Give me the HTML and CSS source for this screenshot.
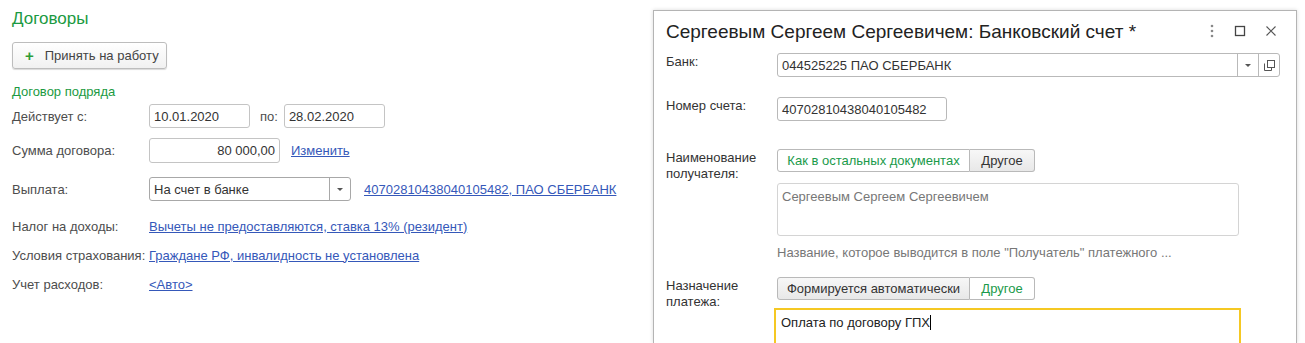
FILE: index.html
```html
<!DOCTYPE html>
<html lang="ru">
<head>
<meta charset="UTF-8">
<title>Договоры</title>
<link rel="stylesheet" href="styles.css">
</head>
<body>

<div class="page">
    <div class="contracts">
        <h1 class="title">Договоры</h1>
        <button type="button" class="btn"><span class="plus">+</span>Принять на работу</button>

        <div class="group-title">Договор подряда</div>

        <div class="row row-dates">
            <span class="label">Действует с:</span>
            <span class="field date">10.01.2020</span>
            <span class="to">по:</span>
            <span class="field date">28.02.2020</span>
        </div>
        <div class="row row-sum">
            <span class="label">Сумма договора:</span>
            <span class="field sum">80 000,00</span>
            <a href="#" class="link change">Изменить</a>
        </div>
        <div class="row row-pay">
            <span class="label">Выплата:</span>
            <span class="field select">
                <span class="select-text">На счет в банке</span>
                <span class="select-btn"><i class="arrow"></i></span>
            </span>
            <a href="#" class="link account">40702810438040105482, ПАО СБЕРБАНК</a>
        </div>
        <div class="row row-text">
            <span class="label">Налог на доходы:</span>
            <a href="#" class="link">Вычеты не предоставляются, ставка 13% (резидент)</a>
        </div>
        <div class="row row-text">
            <span class="label">Условия страхования:</span>
            <a href="#" class="link">Граждане РФ, инвалидность не установлена</a>
        </div>
        <div class="row row-text">
            <span class="label">Учет расходов:</span>
            <a href="#" class="link">&lt;Авто&gt;</a>
        </div>
    </div>

    <div class="dialog">
        <div class="dialog-head">
            <span class="dialog-title">Сергеевым Сергеем Сергеевичем: Банковский счет *</span>
            <span class="head-icons">
                <svg width="6" height="14" viewBox="0 0 6 14"><circle cx="3" cy="2" r="1.3" fill="#888"/><circle cx="3" cy="7" r="1.3" fill="#888"/><circle cx="3" cy="12" r="1.3" fill="#888"/></svg>
                <svg width="12" height="12" viewBox="0 0 12 12"><rect x="1.5" y="1.5" width="9" height="9" fill="none" stroke="#444" stroke-width="1.3"/></svg>
                <svg width="12" height="12" viewBox="0 0 12 12"><path d="M1.5 1.5 L10.5 10.5 M10.5 1.5 L1.5 10.5" stroke="#555" stroke-width="1.1"/></svg>
            </span>
        </div>

        <div class="dialog-body">
            <div class="drow drow-bank">
                <span class="dlabel">Банк:</span>
                <span class="dfield bank">
                    <span class="bank-text">044525225 ПАО СБЕРБАНК</span>
                    <span class="cell"><i class="arrow"></i></span>
                    <span class="cell">
                        <svg width="11" height="11" viewBox="0 0 11 11"><path d="M0.5 3.5 V10.5 H7.5 V8" fill="none" stroke="#555"/><rect x="3.5" y="0.5" width="7" height="7" fill="none" stroke="#555"/></svg>
                    </span>
                </span>
            </div>
            <div class="drow drow-num">
                <span class="dlabel">Номер счета:</span>
                <span class="dfield num">40702810438040105482</span>
            </div>
            <div class="drow drow-name">
                <span class="dlabel">Наименование<br>получателя:</span>
                <div class="dcol">
                    <div class="toggle">
                        <span class="tbtn active first">Как в остальных документах</span>
                        <span class="tbtn second">Другое</span>
                    </div>
                    <div class="area">Сергеевым Сергеем Сергеевичем</div>
                    <div class="hint">Название, которое выводится в поле "Получатель" платежного ...</div>
                </div>
            </div>
            <div class="drow drow-purpose">
                <span class="dlabel">Назначение<br>платежа:</span>
                <div class="dcol">
                    <div class="toggle">
                        <span class="tbtn first">Формируется автоматически</span>
                        <span class="tbtn active second">Другое</span>
                    </div>
                    <div class="area focused">Оплата по договору ГПХ<span class="caret"></span></div>
                </div>
            </div>
        </div>
    </div>
</div>

</body>
</html>
```

FILE: styles.css
```css
body {
    margin: 0;
    font-family: "Liberation Sans", Arial, sans-serif;
    font-size: 13px;
    color: #4d4d4d;
    background: #fff;
    height: 343px;
    overflow: hidden;
}
.page {
    display: flex;
}
.contracts {
    flex: 0 0 641px;
    padding-left: 12px;
}
.title {
    margin: 9px 0 0;
    font-size: 17px;
    font-weight: normal;
    line-height: 20px;
    color: #1b9a42;
}
.btn {
    display: flex;
    align-items: center;
    margin-top: 13px;
    width: 155px;
    height: 27px;
    padding: 0 0 0 12px;
    font-family: inherit;
    font-size: 13px;
    color: #444;
    background: linear-gradient(#ffffff, #f1f1f1);
    border: 1px solid #bdbdbd;
    border-radius: 3px;
    box-shadow: 0 1px 1px rgba(0,0,0,0.15);
}
.plus {
    color: #2e9c35;
    font-weight: bold;
    font-size: 15px;
    margin-right: 11px;
}
.group-title {
    margin-top: 15px;
    line-height: 16px;
    color: #1b9a42;
}
.row {
    display: flex;
    align-items: center;
}
.label {
    flex: 0 0 137px;
}
.row-dates {
    margin-top: 4px;
    height: 24px;
}
.row-sum {
    margin-top: 10px;
    height: 25px;
}
.row-pay {
    margin-top: 14px;
    height: 24px;
}
.row-text {
    margin-top: 9px;
    height: 20px;
}
.row-text:nth-child(7) {
    margin-top: 15px;
}
.field {
    box-sizing: border-box;
    height: 100%;
    display: flex;
    align-items: center;
    padding: 0 4px;
    border: 1px solid #c4c4c4;
    border-radius: 3px;
    color: #333;
}
.date {
    width: 101px;
}
.to {
    margin: 0 6px 0 10px;
}
.sum {
    width: 131px;
    justify-content: flex-end;
}
.select {
    width: 202px;
    padding: 0;
    border-color: #a8a8a8;
}
.select-text {
    flex: 1;
    padding-left: 4px;
}
.select-btn {
    width: 20px;
    height: 100%;
    border-left: 1px solid #a8a8a8;
    display: flex;
    align-items: center;
    justify-content: center;
}
.arrow {
    display: block;
    width: 0;
    height: 0;
    border-left: 3px solid transparent;
    border-right: 3px solid transparent;
    border-top: 3px solid #555;
}
.link {
    color: #3558b9;
    text-decoration: underline;
}
.change {
    margin-left: 11px;
}
.account {
    margin-left: 13px;
}

/* dialog */
.dialog {
    flex: 0 0 644px;
    margin-top: 10px;
    height: 333px;
    overflow: hidden;
    box-sizing: border-box;
    border: 1px solid #b4b4b4;
    border-bottom: none;
    box-shadow: 0 0 4px rgba(0,0,0,0.15);
    background: #fff;
    color: #333;
}
.dialog-head {
    display: flex;
    align-items: center;
    height: 40px;
    padding: 0 12px 0 12px;
}
.dialog-title {
    flex: 1;
    font-size: 19px;
    color: #222;
    padding-top: 2px;
}
.head-icons {
    display: flex;
    align-items: center;
    gap: 19px;
    padding-right: 7px;
}
.dialog-body {
    padding: 2px 0 0 12px;
}
.drow {
    display: flex;
    align-items: flex-start;
}
.dlabel {
    flex: 0 0 111px;
    line-height: 16px;
    padding-top: 1px;
}
.dfield {
    box-sizing: border-box;
    height: 24px;
    display: flex;
    align-items: center;
    border: 1px solid #b9b9b9;
    border-radius: 3px;
    padding: 0 4px;
}
.bank {
    width: 503px;
    padding: 0;
}
.bank-text {
    flex: 1;
    padding-left: 4px;
}
.cell {
    width: 20px;
    height: 100%;
    border-left: 1px solid #b9b9b9;
    display: flex;
    align-items: center;
    justify-content: center;
}
.drow-num {
    margin-top: 20px;
}
.num {
    width: 170px;
}
.drow-name {
    margin-top: 28px;
}
.drow-purpose {
    margin-top: 16px;
}
.dcol {
    display: flex;
    flex-direction: column;
}
.toggle {
    display: flex;
    height: 23px;
}
.tbtn {
    box-sizing: border-box;
    display: flex;
    align-items: center;
    justify-content: center;
    border: 1px solid #b9b9b9;
    background: linear-gradient(#f7f7f7, #e8e8e8);
    color: #333;
}
.tbtn.first {
    width: 193px;
    border-radius: 3px 0 0 3px;
}
.tbtn.second {
    width: 65px;
    border-left: none;
    border-radius: 0 3px 3px 0;
}
.tbtn.active {
    background: #fff;
    color: #1a9a4a;
}
.area {
    box-sizing: border-box;
    margin-top: 11px;
    width: 462px;
    height: 53px;
    border: 1px solid #d4d4d4;
    border-radius: 3px;
    padding: 5px 4px;
    color: #777;
}
.hint {
    margin-top: 9px;
    line-height: 16px;
    color: #777;
}
.area.focused {
    margin-top: 8px;
    margin-left: -3px;
    width: 467px;
    height: 60px;
    border: 2px solid #f5c823;
    border-radius: 0;
    padding: 5px 5px;
    color: #222;
}
.caret {
    display: inline-block;
    width: 1px;
    height: 15px;
    background: #000;
    vertical-align: -3px;
}
```
